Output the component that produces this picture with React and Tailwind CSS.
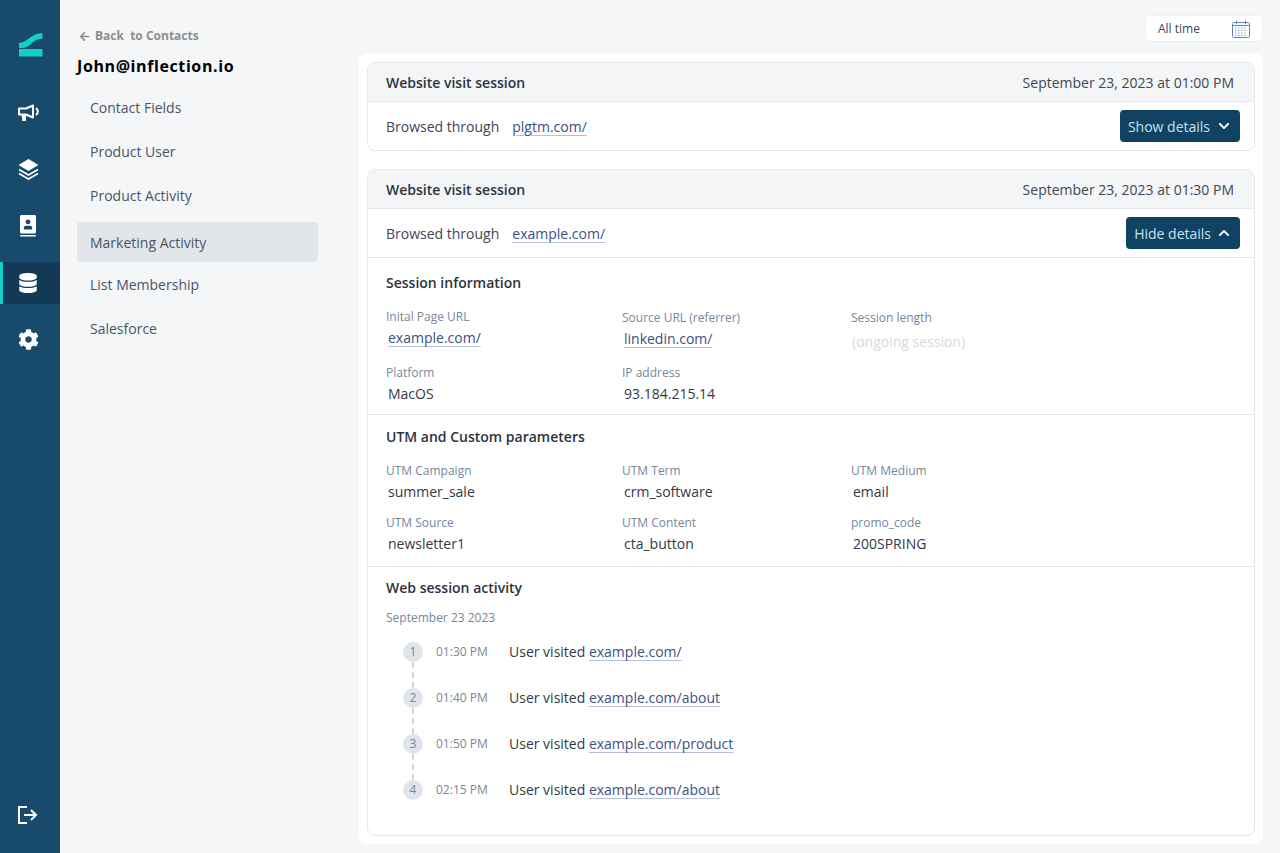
import React from "react";
import {FaArrowLeft, FaChevronDown, FaChevronUp, FaCog, FaDatabase} from "react-icons/fa";

const font = {fontFamily: '"Open Sans", sans-serif'};

const Logo = () => (
    <svg width="24" height="24" viewBox="0 0 24 24" fill="#13cfc6">
        <rect x="0" y="16" width="23.5" height="7.5"/>
        <path d="M0 10 C8 10 12 0 23.5 0 V5.5 C14 5.5 11 15 4 15 H0 Z"/>
    </svg>
);

const Megaphone = () => (
    <svg width="21" height="18" viewBox="0 0 21 18">
        <path d="M1 4.5 H8 L15 1.5 V13.5 L8 10.5 H1 Z" fill="none" stroke="white" strokeWidth="2" strokeLinejoin="round"/>
        <path d="M3.5 11 H8 V17 H4.5 Z" fill="white"/>
        <path d="M18 4 C20.5 6 20.5 9 18 11" fill="none" stroke="white" strokeWidth="2"/>
    </svg>
);

const Layers = () => (
    <svg width="21" height="21" viewBox="0 0 21 21">
        <path d="M10.5 0 L20.5 6 L10.5 12 L0.5 6 Z" fill="white"/>
        <path d="M1 10.5 L10.5 16 L20 10.5 M1 14.5 L10.5 20 L20 14.5" fill="none" stroke="white" strokeWidth="1.6"/>
    </svg>
);

const ContactBook = () => (
    <svg width="16" height="22" viewBox="0 0 16 22" fill="white">
        <path fillRule="evenodd"
              d="M1.5 0 H14.5 a1.5 1.5 0 0 1 1.5 1.5 V17 a1.5 1.5 0 0 1 -1.5 1.5 H1.5 a1.5 1.5 0 0 1 -1.5 -1.5 V1.5 A1.5 1.5 0 0 1 1.5 0 Z M8 4.5 a2.4 2.4 0 1 0 0.01 0 Z M3.8 14.5 H12.2 V13 a2.3 2.3 0 0 0 -2.3 -2.3 H6.1 a2.3 2.3 0 0 0 -2.3 2.3 Z"/>
        <rect x="0" y="20" width="16" height="1.6" rx="0.8"/>
    </svg>
);

const Logout = () => (
    <svg width="20" height="18" viewBox="0 0 20 18" fill="none" stroke="white" strokeWidth="2">
        <path d="M9 1 H1 V17 H9"/>
        <path d="M6 9 H18 M13 4 L18 9 L13 14"/>
    </svg>
);

const CalendarIcon = () => (
    <svg width="18" height="18" viewBox="0 0 18 18" fill="none" stroke="#5f86b3" strokeWidth="1">
        <rect x="0.5" y="2.5" width="17" height="15" rx="1"/>
        <path d="M0.5 5.5 H17.5 M4.5 0.5 V4 M13.5 0.5 V4"/>
        <path d="M3 8 H15 M3 10.5 H15 M3 13 H15 M3 15.5 H15" strokeDasharray="1.5 1.5" stroke="#8aa5c6"/>
    </svg>
);

const navItems = [
    {name: "Contact Fields"},
    {name: "Product User"},
    {name: "Product Activity"},
    {name: "Marketing Activity", active: true},
    {name: "List Membership"},
    {name: "Salesforce"},
];

const sessionFields = [
    {label: "Inital Page URL", value: "example.com/", link: true, raised: true},
    {label: "Source URL (referrer)", value: "linkedin.com/", link: true},
    {label: "Session length", value: "(ongoing session)", muted: true},
    {label: "Platform", value: "MacOS"},
    {label: "IP address", value: "93.184.215.14"},
];

const utmFields = [
    {label: "UTM Campaign", value: "summer_sale"},
    {label: "UTM Term", value: "crm_software"},
    {label: "UTM Medium", value: "email"},
    {label: "UTM Source", value: "newsletter1"},
    {label: "UTM Content", value: "cta_button"},
    {label: "promo_code", value: "200SPRING"},
];

const activity = [
    {time: "01:30 PM", url: "example.com/"},
    {time: "01:40 PM", url: "example.com/about"},
    {time: "01:50 PM", url: "example.com/product"},
    {time: "02:15 PM", url: "example.com/about"},
];

const linkClass = "text-[#3d5082] underline decoration-[#b4bfdd] underline-offset-[3px]";

const Sidebar = () => (
    <div className="w-[60px] shrink-0 bg-[#174a6b] flex flex-col">
        <div className="h-[92px] flex pt-[33px] pl-[19px]">
            <Logo/>
        </div>
        <div className="h-[42px] flex items-center justify-center pr-[4px]"><Megaphone/></div>
        <div className="h-[42px] mt-[14px] flex items-center justify-center pr-[4px]"><Layers/></div>
        <div className="h-[42px] mt-[15px] flex items-center justify-center pr-[4px]"><ContactBook/></div>
        <div className="h-[42px] mt-[15px] flex items-center justify-center bg-[#123a57] border-l-[3px] border-[#13cfc6] pr-[7px]"><FaDatabase className="text-white text-[20px]"/></div>
        <div className="h-[42px] mt-[14px] flex items-center justify-center pr-[4px]"><FaCog className="text-white text-[21px]"/></div>
        <div className="mt-auto h-[47px] flex justify-center pr-[4px]"><Logout/></div>
    </div>
);

const SubNav = () => (
    <div className="w-[299px] shrink-0 pl-[17px] pr-[41px]">
        <div className="pt-[28px] pl-[2px] flex items-center gap-[5px] text-[12px] leading-[16px] font-bold text-[#8e8e8e] whitespace-pre">
            <FaArrowLeft className="text-[11px]"/>
            <span>Back  to Contacts</span>
        </div>
        <h1 className="mt-[10px] text-[16px] leading-[24px] font-bold tracking-[0.6px] text-black">John@inflection.io</h1>
        <div className="mt-[9px] flex flex-col gap-[4px]">
            {navItems.map((item) => (
                <div key={item.name}
                     className={item.active
                         ? "h-[40px] mt-[3px] -mb-[2px] flex items-center px-[13px] rounded bg-[#e2e6eb] text-[14px] text-[#4a5564]"
                         : "h-[40px] flex items-center px-[13px] rounded text-[14px] text-[#4a5564]"}>
                    {item.name}
                </div>
            ))}
        </div>
    </div>
);

const CardHeader = ({date}) => (
    <div className="h-[39px] flex items-center justify-between pl-[18px] pr-[20px] bg-[#f3f5f7] border-b border-[#e3e7ec] rounded-t-lg">
        <span className="text-[14px] font-semibold text-[#2b3440]">Website visit session</span>
        <span className="text-[14px] text-[#3e4754]">{date}</span>
    </div>
);

const BrowseRow = ({url, open}) => (
    <div className="h-[48px] flex items-center justify-between pl-[18px] pr-[14px] text-[14px] text-[#3e4754]">
        <div>
            Browsed through
            <a className={`${linkClass} ml-[13px]`}>{url}</a>
        </div>
        <button type="button"
                className={open
                    ? "h-[32px] pl-[8px] pr-[10px] flex items-center gap-[7px] rounded bg-[#0f4263] text-[14px] text-[#c6e3ee]"
                    : "h-[32px] pl-[8px] pr-[10px] flex items-center gap-[8px] rounded bg-[#0f4263] text-[14px] text-[#c6e3ee]"}>
            {open ? "Hide details" : "Show details"}
            {open
                ? <FaChevronUp className="text-white text-[12px]"/>
                : <FaChevronDown className="text-white text-[12px]"/>}
        </button>
    </div>
);

const Fields = ({fields, className}) => (
    <div className={`grid grid-cols-[236px_229px_1fr] gap-y-[10px] ${className}`}>
        {fields.map((f) => (
            <div key={f.label} className={f.raised ? "-mt-px" : ""}>
                <div className="text-[12px] leading-[18px] text-[#76889a]">{f.label}</div>
                <div className={`text-[14px] leading-[24px] ${f.muted ? "pt-[3px] pl-[1px] text-[#d3dae1]" : "pl-[2px] text-[#323a45]"}`}>
                    {f.link ? <a className={linkClass}>{f.value}</a> : f.value}
                </div>
            </div>
        ))}
    </div>
);

const App = () => {
    return (
        <div style={font} className="flex h-screen overflow-hidden bg-[#f4f6f8]">
            <Sidebar/>
            <SubNav/>
            <div className="flex-1 pr-[17px] flex flex-col">
                <div className="flex justify-end pt-[15px]">
                    <div className="w-[118px] h-[27px] pl-[12px] pr-[12px] flex items-center justify-between bg-white border border-[#eef0f3] rounded-sm text-[12px] text-[#3e4754]">
                        All time
                        <CalendarIcon/>
                    </div>
                </div>
                <div className="mt-[12px] h-[790px] bg-white rounded-lg p-[8px] flex flex-col gap-[18px]">
                    <div className="h-[89px] border border-[#e3e7ec] rounded-lg">
                        <CardHeader date="September 23, 2023 at 01:00 PM"/>
                        <BrowseRow url="plgtm.com/"/>
                    </div>
                    <div className="h-[667px] border border-[#e3e7ec] rounded-lg">
                        <CardHeader date="September 23, 2023 at 01:30 PM"/>
                        <BrowseRow url="example.com/" open/>
                        <div className="h-[157px] border-t border-[#e3e7ec] pl-[18px] pt-[15px]">
                            <h2 className="text-[14px] leading-[20px] font-semibold text-[#2b3440]">Session information</h2>
                            <Fields fields={sessionFields} className="mt-[16px]"/>
                        </div>
                        <div className="h-[152px] border-t border-[#e3e7ec] pl-[18px] pt-[12px]">
                            <h2 className="text-[14px] leading-[20px] font-semibold text-[#2b3440]">UTM and Custom parameters</h2>
                            <Fields fields={utmFields} className="mt-[15px]"/>
                        </div>
                        <div className="border-t border-[#e3e7ec] pl-[18px] pt-[11px]">
                            <h2 className="text-[14px] leading-[20px] font-semibold text-[#2b3440]">Web session activity</h2>
                            <div className="mt-[11px] text-[12px] leading-[18px] text-[#76889a]">September 23 2023</div>
                            <div className="mt-[15px] pl-[17px]">
                                {activity.map((a, i) => (
                                    <div key={i} className="flex h-[46px]">
                                        <div className="w-[20px] flex flex-col items-center">
                                            <div className="w-[20px] h-[20px] shrink-0 rounded-full bg-[#e0e5eb] flex items-center justify-center text-[12px] text-[#76889a]">{i + 1}</div>
                                            {i < activity.length - 1 && <div className="h-[26px] border-l-2 border-dashed border-[#d2d4d7]"/>}
                                        </div>
                                        <div className="ml-[13px] w-[73px] text-[12px] leading-[20px] text-[#76889a]">{a.time}</div>
                                        <div className="text-[14px] leading-[20px] text-[#323a45]">
                                            User visited <a className={linkClass}>{a.url}</a>
                                        </div>
                                    </div>
                                ))}
                            </div>
                        </div>
                    </div>
                </div>
            </div>
        </div>
    );
};

export default App;
